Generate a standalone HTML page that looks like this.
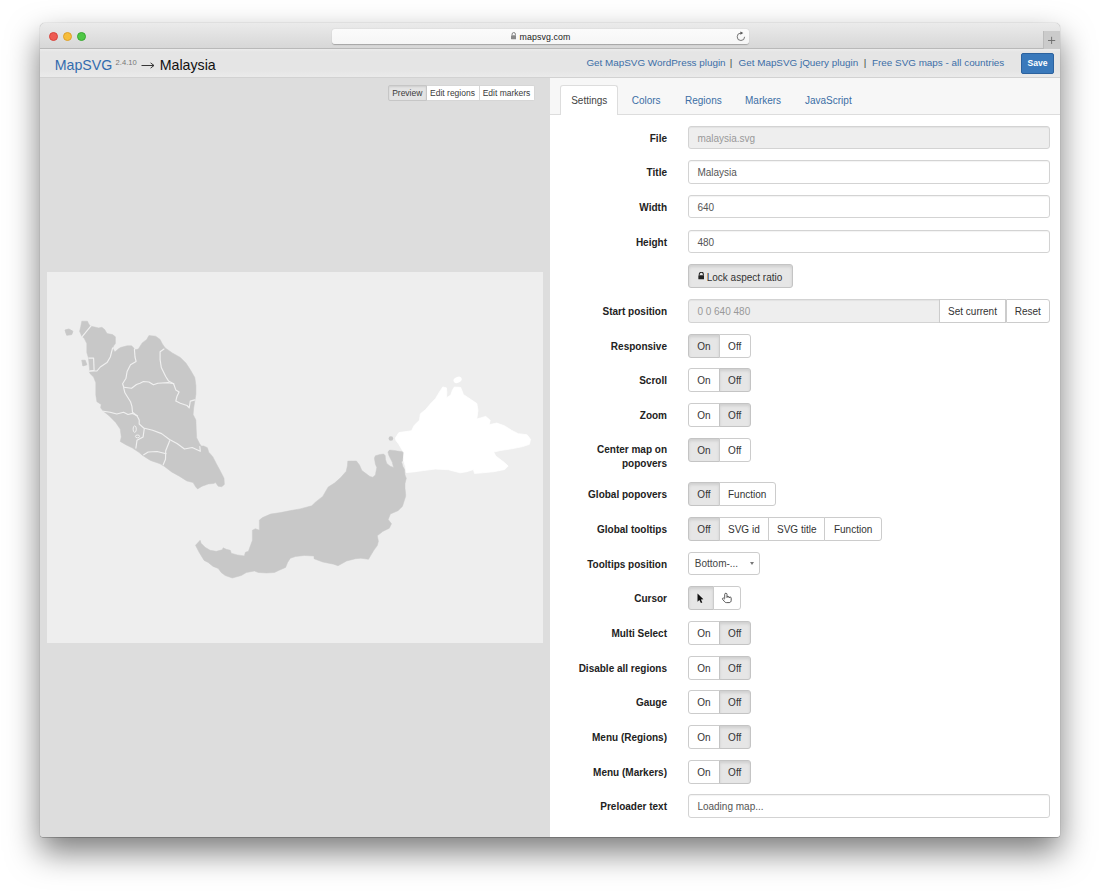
<!DOCTYPE html>
<html><head><meta charset="utf-8">
<style>
*{margin:0;padding:0;box-sizing:border-box}
html,body{width:1100px;height:894px;overflow:hidden;background:#fff;font-family:"Liberation Sans",sans-serif}
.abs{position:absolute}
#win{position:absolute;left:40px;top:23px;width:1020px;height:814px;border-radius:5px 5px 3px 3px;box-shadow:0 15px 32px rgba(0,0,0,0.52),0 0.5px 0.5px rgba(0,0,0,0.35),0 0 1px rgba(0,0,0,0.45);overflow:hidden;background:#dedede}
#titlebar{position:absolute;left:0;top:0;width:1020px;height:26px;background:linear-gradient(#ebebeb,#d7d7d7);border-bottom:1px solid #b9b9b9}
.dot{position:absolute;top:8.6px;width:9px;height:9px;border-radius:50%}
#url{position:absolute;left:292px;top:5.7px;width:416.7px;height:15.5px;background:linear-gradient(#fbfbfb,#f6f6f6);border-radius:3px;box-shadow:0 0.5px 1px rgba(0,0,0,0.25)}
#urltext{position:absolute;left:187.5px;top:3.2px;font-size:8.8px;color:#222;letter-spacing:0.1px}
#plus{position:absolute;left:1002.8px;top:8px;width:17.5px;height:18px;background:#cbcbcb;border-left:1px solid #bcbcbc}
#hdr{position:absolute;left:0;top:26px;width:1020px;height:29px;background:linear-gradient(#ececec 0,#e5e5e5 3px,#e5e5e5 21px,#eaeaea 27px);border-bottom:1px solid #d2d2d2}
#left{position:absolute;left:0;top:55px;width:510px;height:759px;background:#dddddd}
#right{position:absolute;left:510px;top:55px;width:510px;height:759px;background:#fff}
#tabs{position:absolute;left:0;top:0;width:510px;height:37px;background:#f7f7f7;border-bottom:1px solid #dddddd}
.tab{position:absolute;top:17.5px;font-size:10px;color:#3b6ea5;line-height:10px}
.tabact{position:absolute;left:9.7px;top:7.2px;width:58.5px;height:30px;background:#fff;border:1px solid #ddd;border-bottom:none;border-radius:3px 3px 0 0}
/* form in window coords: subtract 40,22 */
.lbl{position:absolute;right:433px;font-size:10px;font-weight:bold;color:#222;line-height:24px;padding-top:1px;text-align:right;white-space:nowrap}
.lbl.two{line-height:14px;padding-top:5.5px}
.inp{position:absolute;left:688.2px;width:361.5px;height:23.5px;border:1px solid #d3d3d3;border-radius:3px;background:#fff;font-size:10px;color:#555;line-height:23px;padding-left:8.2px;box-shadow:inset 0 1px 1px rgba(0,0,0,0.05)}
.inp.dis{background:#eeeeee;color:#999}
.inp.sp{width:252px;border-radius:3px 0 0 3px}
.btn{position:absolute;left:688.2px;height:24px;border:1px solid #ccc;border-radius:3px;background:#fff;font-size:10px;color:#333;line-height:23.2px;text-align:center}
.lockbtn{width:104.5px;background:#e6e6e6;border-color:#c4c4c4;text-align:left;box-shadow:inset 0 2px 3px rgba(0,0,0,0.1)}
.bg{position:absolute;left:688.2px;height:24px;display:flex}
.bg .b{position:relative;height:24px;border:1px solid #ccc;background:#fff;font-size:10px;color:#333;line-height:23.4px;text-align:center;margin-left:-1px}
.bg .b:first-child{margin-left:0;border-radius:3px 0 0 3px}
.bg .b:last-child{border-radius:0 3px 3px 0}
.bg .b.act{background:#e6e6e6;border-color:#c4c4c4;box-shadow:inset 0 2px 3px rgba(0,0,0,0.1)}
.sel{position:absolute;left:688.2px;width:72px;height:23.5px;border:1px solid #ccc;border-radius:3px;background:#fff;font-size:10px;color:#444;line-height:22px;padding-left:5.6px}
.caret{position:absolute;left:61.3px;top:9.8px;width:0;height:0;border-left:2.4px solid transparent;border-right:2.4px solid transparent;border-top:3.2px solid #777}
.lnk{top:9.1px;font-size:9.9px;line-height:9.9px;color:#3c6ea7;white-space:nowrap}
</style></head><body>
<div id="win">
 <div id="titlebar">
  <div class="dot" style="left:9px;background:#ee5b53;border:0.5px solid #d8443d"></div>
  <div class="dot" style="left:23px;background:#f6bd3b;border:0.5px solid #dea02a"></div>
  <div class="dot" style="left:37px;background:#4fc746;border:0.5px solid #3aa932"></div>
  <div id="url">
   <svg width="5.5" height="7.5" viewBox="0 0 6 8" style="position:absolute;left:178.5px;top:3.5px"><path d="M1.2 3.5V2.3a1.8 1.8 0 0 1 3.6 0v1.2" fill="none" stroke="#777" stroke-width="1"/><rect x="0" y="3.4" width="6" height="4.3" rx="0.5" fill="#888"/></svg>
   <div id="urltext">mapsvg.com</div>
   <svg width="418" height="16" viewBox="0 0 418 16" style="position:absolute;left:0;top:0"><path d="M412.6 7.8A3.7 3.7 0 1 1 408.9 4.1" fill="none" stroke="#6f6f6f" stroke-width="0.95"/><path d="M408.4 2.4L411.3 4.1L408.4 5.8Z" fill="#555"/></svg>
  </div>
  <div id="plus"><svg width="17" height="18" viewBox="0 0 17 18" style="position:absolute;left:0;top:0"><path d="M7.6 5.8V13M4 9.5H11.2" stroke="#6a6a6a" stroke-width="0.9"/></svg></div>
 </div>
 <div id="hdr">
  <div class="abs" style="left:14.7px;top:9.2px;font-size:14.2px;line-height:14.2px;color:#336cae;white-space:nowrap">MapSVG</div>
  <div class="abs" style="left:75.6px;top:9.8px;font-size:7.6px;line-height:7.6px;color:#777;white-space:nowrap">2.4.10</div>
  <svg class="abs" style="left:101px;top:13px" width="14" height="7" viewBox="0 0 14 7"><path d="M0.5 3.5H12.6" stroke="#222" stroke-width="0.9"/><path d="M9.6 0.9L13 3.5L9.6 6.1" fill="none" stroke="#222" stroke-width="0.9"/></svg>
  <div class="abs" style="left:119.7px;top:9.2px;font-size:14.2px;line-height:14.2px;color:#111;white-space:nowrap">Malaysia</div>
  <div class="abs lnk" style="left:546.4px">Get MapSVG WordPress plugin</div>
  <div class="abs lnk" style="left:689.7px;color:#444">|</div>
  <div class="abs lnk" style="left:698.5px">Get MapSVG jQuery plugin</div>
  <div class="abs lnk" style="left:823.7px;color:#444">|</div>
  <div class="abs lnk" style="left:832px">Free SVG maps - all countries</div>
  <div class="abs" style="left:981px;top:4.3px;width:33px;height:20.5px;background:#3a79bb;border:1px solid #2c629e;border-radius:2px;color:#fff;font-size:8.6px;font-weight:bold;text-align:center;line-height:18.5px">Save</div>
 </div>
 <div id="left">
  <div class="abs" style="left:348px;top:7px;height:15.5px;display:flex;font-size:8.5px;color:#3a3a3a;line-height:15px;padding-top:0">
   <div style="width:38.5px;background:#e4e4e4;border:1px solid #c6c6c6;border-radius:2px 0 0 2px;text-align:center;box-shadow:inset 0 1px 2px rgba(0,0,0,0.1)">Preview</div>
   <div style="width:53px;background:#fff;border:1px solid #d6d6d6;border-left:none;text-align:center">Edit regions</div>
   <div style="width:55px;background:#fff;border:1px solid #d6d6d6;border-left:none;border-radius:0 2px 2px 0;text-align:center">Edit markers</div>
  </div>
  <div class="abs" style="left:7px;top:194px;width:496px;height:371px;background:#eeeeee;overflow:hidden"><svg width="1100" height="894" viewBox="0 0 1100 894" style="position:absolute;left:-47px;top:-272px">
<path d="M81.8 321.2 L87.4 321.2 L89.1 324.5 L90.8 326.2 L93.6 326.8 L98.6 327.9 L101.9 327.3 L104.7 329.6 L107.0 333.5 L112.6 334.6 L115.4 336.8 L115.4 343.6 L113.7 345.8 L112.6 348.0 L114.8 352.0 L118.2 349.1 L120.4 347.5 L127.1 345.8 L131.6 345.8 L133.8 348.0 L135.0 349.7 L138.3 349.1 L142.2 342.9 L146.7 339.5 L148.9 335.6 L155.7 336.2 L160.1 339.5 L162.4 344.0 L165.2 347.9 L172.4 353.0 L180.3 357.4 L185.9 363.0 L190.3 369.7 L194.8 377.6 L195.9 385.4 L195.9 394.4 L194.8 401.1 L193.7 407.8 L193.1 414.5 L195.9 420.1 L196.2 428.9 L196.7 437.9 L199.4 443.3 L201.2 446.0 L203.8 446.0 L207.4 447.7 L208.8 452.2 L212.8 456.7 L216.4 463.8 L220.8 471.9 L224.0 478.2 L224.4 484.4 L221.7 486.7 L218.2 486.2 L215.5 482.6 L213.7 483.5 L208.3 484.0 L202.1 486.2 L197.6 488.9 L195.8 487.1 L193.1 482.6 L186.8 480.9 L179.7 476.4 L171.6 471.9 L164.5 466.5 L160.0 463.8 L150.4 460.4 L142.6 455.4 L139.2 452.6 L132.5 448.1 L125.8 444.7 L120.2 441.4 L121.3 436.9 L120.2 429.1 L115.7 422.4 L109.0 415.7 L103.4 411.2 L100.6 407.8 L101.2 404.5 L96.9 401.7 L95.8 395.0 L95.8 382.7 L93.6 377.1 L90.2 373.8 L89.1 371.5 L89.6 369.8 L88.5 358.1 L86.8 352.5 L86.8 343.6 L84.0 338.0 L81.8 336.3 L79.6 331.3 L80.7 326.8Z" fill="#c8c8c8" stroke="#c8c8c8" stroke-width="0.5" stroke-linejoin="round"/>
<path d="M65.0 330.1 L68.9 329.0 L72.9 331.3 L71.7 334.6 L66.7 335.2Z" fill="#c8c8c8" stroke="#c8c8c8" stroke-width="0.8" stroke-linejoin="round"/>
<path d="M81.8 360.3 L85.2 360.3 L86.8 364.8 L82.9 365.9Z" fill="#c8c8c8" stroke="#c8c8c8" stroke-width="0.8" stroke-linejoin="round"/>
<path d="M82.4 336.3 L90.8 326.2" fill="none" stroke="#f0f0f0" stroke-width="1.15" stroke-linejoin="round" stroke-linecap="round"/>
<path d="M88.9 358.1 L93.6 358.1 L94.1 370.4 L89.1 371.3" fill="none" stroke="#f0f0f0" stroke-width="1.15" stroke-linejoin="round" stroke-linecap="round"/>
<path d="M89.6 371.0 L96.9 371.0 L100.3 367.0 L107.0 362.6 L110.3 357.0 L112.6 348.0" fill="none" stroke="#f0f0f0" stroke-width="1.15" stroke-linejoin="round" stroke-linecap="round"/>
<path d="M134.4 349.1 L135.0 357.0 L136.1 361.5 L130.5 364.8 L127.1 371.5 L126.0 378.2 L122.6 383.8 L123.8 387.2" fill="none" stroke="#f0f0f0" stroke-width="1.15" stroke-linejoin="round" stroke-linecap="round"/>
<path d="M123.8 387.2 L131.6 388.3 L136.5 384.5 L140.0 383.2 L143.4 381.5 L148.9 382.0 L153.4 384.8 L157.9 383.2 L168.0 382.6 L173.6 383.7" fill="none" stroke="#f0f0f0" stroke-width="1.15" stroke-linejoin="round" stroke-linecap="round"/>
<path d="M164.0 349.0 L160.1 351.8 L160.1 359.7 L161.3 367.5 L165.7 376.5 L168.5 380.9 L173.6 383.7" fill="none" stroke="#f0f0f0" stroke-width="1.15" stroke-linejoin="round" stroke-linecap="round"/>
<path d="M173.6 383.7 L175.8 389.9 L179.1 392.1 L176.9 396.6 L175.8 401.1 L180.3 403.3 L187.0 405.5 L189.2 407.8 L190.3 401.1 L194.8 399.9" fill="none" stroke="#f0f0f0" stroke-width="1.15" stroke-linejoin="round" stroke-linecap="round"/>
<path d="M123.8 388.3 L124.9 392.8 L130.5 401.7 L132.0 406.7 L132.5 412.3 L137.0 415.7" fill="none" stroke="#f0f0f0" stroke-width="1.15" stroke-linejoin="round" stroke-linecap="round"/>
<path d="M103.4 411.2 L110.1 412.3 L116.8 414.0 L123.6 412.3 L128.0 414.5 L132.5 413.4 L137.0 415.7" fill="none" stroke="#f0f0f0" stroke-width="1.15" stroke-linejoin="round" stroke-linecap="round"/>
<path d="M137.0 415.7 L139.2 420.1 L139.2 424.0 L143.7 428.0 L152.6 430.2 L161.6 433.6 L169.5 439.5 L177.0 443.5 L184.5 449.0 L192.2 447.5 L200.3 451.3 L199.8 446.5" fill="none" stroke="#f0f0f0" stroke-width="1.15" stroke-linejoin="round" stroke-linecap="round"/>
<path d="M144.3 428.5 L143.1 436.9 L137.0 440.3 L135.9 448.1" fill="none" stroke="#f0f0f0" stroke-width="1.15" stroke-linejoin="round" stroke-linecap="round"/>
<path d="M169.7 440.7 L165.7 450.8 L165.5 459.2 L163.2 464.8" fill="none" stroke="#f0f0f0" stroke-width="1.15" stroke-linejoin="round" stroke-linecap="round"/>
<path d="M143.7 454.8 L148.2 452.0 L157.1 451.5 L166.1 453.7" fill="none" stroke="#f0f0f0" stroke-width="1.15" stroke-linejoin="round" stroke-linecap="round"/>
<ellipse cx="134.7" cy="429.1" rx="1.6" ry="3.2" fill="none" stroke="#f0f0f0" stroke-width="1"/>
<ellipse cx="137.5" cy="436.4" rx="2.1" ry="1.4" fill="none" stroke="#f0f0f0" stroke-width="1"/>
<path d="M195.5 545.3 L200.1 540.3 L201.1 543.3 L205.1 547.3 L210.1 550.3 L216.2 551.3 L222.2 549.8 L223.2 547.8 L226.2 549.3 L230.3 550.3 L231.3 553.3 L237.3 554.9 L244.3 555.9 L245.4 552.3 L248.4 551.3 L252.4 540.3 L252.4 530.2 L255.4 528.7 L259.4 530.2 L259.4 520.1 L262.5 517.6 L270.5 514.1 L280.6 512.6 L290.6 510.6 L300.0 508.9 L311.7 505.8 L315.7 501.9 L322.7 496.4 L328.2 487.0 L334.5 483.1 L340.7 477.6 L346.2 471.3 L347.4 465.8 L347.8 461.1 L356.4 461.0 L359.5 465.1 L361.9 470.5 L366.0 473.6 L370.0 476.6 L372.8 477.2 L375.4 474.9 L376.1 470.9 L376.8 467.5 L375.4 464.2 L374.4 458.1 L375.4 455.8 L380.1 454.4 L383.5 454.1 L385.2 455.4 L385.5 459.5 L386.8 463.5 L390.2 466.2 L393.6 467.5 L392.2 462.1 L388.9 455.4 L387.9 452.1 L389.5 450.1 L393.6 450.4 L397.6 451.1 L402.3 451.7 L404.6 454.1 L404.0 458.8 L401.6 462.1 L403.0 466.8 L404.6 469.5 L405.0 474.9 L406.3 478.3 L405.0 483.6 L405.0 488.3 L405.6 493.7 L405.6 496.5 L402.4 506.4 L398.0 510.7 L390.4 514.0 L388.2 519.5 L391.5 523.8 L389.3 528.2 L382.7 531.5 L377.3 535.8 L378.4 541.3 L377.3 545.6 L374.0 550.0 L370.7 555.5 L368.5 559.3 L360.9 558.2 L355.5 558.7 L346.7 560.9 L338.0 565.8 L333.6 564.2 L322.7 562.0 L314.0 558.7 L314.0 556.0 L304.2 555.5 L295.5 556.5 L290.3 558.3 L287.6 562.4 L285.6 567.4 L278.6 570.5 L274.5 572.5 L266.5 573.0 L258.4 572.5 L254.4 571.0 L246.4 572.5 L241.3 575.5 L232.3 578.0 L225.2 575.5 L221.2 572.5 L218.2 568.4 L213.1 566.4 L208.1 562.4 L204.1 560.4 L199.1 552.3Z" fill="#c8c8c8" stroke="#c8c8c8" stroke-width="0.5" stroke-linejoin="round"/>
<path d="M396.0 440.6 L395.4 438.0 L398.9 432.6 L411.5 430.8 L414.2 425.5 L419.5 420.1 L420.4 413.8 L425.8 409.4 L430.3 404.0 L435.6 398.6 L439.2 392.4 L442.8 387.0 L446.4 387.9 L446.8 392.4 L446.4 397.7 L450.8 395.1 L452.6 389.7 L454.4 387.0 L460.7 387.5 L463.4 394.5 L470.1 399.0 L476.8 403.5 L477.9 410.2 L476.8 419.1 L485.7 416.4 L490.2 420.3 L489.1 424.7 L496.9 423.1 L504.7 425.9 L511.5 430.3 L518.2 433.7 L527.1 434.8 L530.5 439.3 L529.4 444.3 L522.6 446.6 L511.5 448.8 L500.3 450.5 L493.6 452.1 L495.8 456.1 L504.7 462.8 L508.1 466.1 L504.7 469.5 L493.6 471.7 L482.4 472.8 L474.5 473.4 L473.4 469.5 L466.7 471.7 L460.0 472.8 L448.4 469.7 L435.3 469.0 L423.6 470.5 L413.5 471.9 L406.2 472.6 L405.5 466.8 L403.3 459.5 L404.0 452.3 L401.8 449.4 L398.9 444.3Z" fill="#ffffff" stroke="#fff" stroke-width="0.8" stroke-linejoin="round"/>
<ellipse cx="457.6" cy="379.8" rx="4.3" ry="2.9" transform="rotate(-25 457.6 379.8)" fill="#fff"/>
<circle cx="390.9" cy="438.5" r="2.3" fill="#c8c8c8"/>
</svg></div>
 </div>
 <div id="right">
  <div id="tabs">
   <div class="tabact"></div>
   <div class="tab" style="left:21.2px;color:#444">Settings</div>
   <div class="tab" style="left:81.7px">Colors</div>
   <div class="tab" style="left:135px">Regions</div>
   <div class="tab" style="left:195px">Markers</div>
   <div class="tab" style="left:255px">JavaScript</div>
  </div>
 </div>
 <div id="form" class="abs" style="left:-40px;top:-23px;width:1100px;height:894px">
<div class="lbl" style="top:125.5px">File</div>
<div class="inp dis" style="top:125.5px">malaysia.svg</div>
<div class="lbl" style="top:160.2px">Title</div>
<div class="inp" style="top:160.2px">Malaysia</div>
<div class="lbl" style="top:194.9px">Width</div>
<div class="inp" style="top:194.9px">640</div>
<div class="lbl" style="top:229.6px">Height</div>
<div class="inp" style="top:229.6px">480</div>
<div class="btn lockbtn" style="top:264.3px"><svg width="6.6" height="7.4" viewBox="0 0 7 8" style="position:absolute;left:8.4px;top:7px"><path d="M1.3 3.6V2.4a2.2 2.2 0 0 1 4.4 0v1.2" fill="none" stroke="#222" stroke-width="1.1"/><rect x="0.3" y="3.5" width="6.4" height="4.3" rx="0.6" fill="#222"/></svg><span style="position:absolute;left:17.5px;top:0.4px">Lock aspect ratio</span></div>
<div class="lbl" style="top:299.0px">Start position</div>
<div class="inp dis sp" style="top:299.0px">0 0 640 480</div>
<div class="btn" style="top:299.0px;left:939px;width:67px;border-radius:0">Set current</div>
<div class="btn" style="top:299.0px;left:1005.5px;width:44.5px;border-radius:0 3px 3px 0">Reset</div>
<div class="lbl" style="top:333.7px">Responsive</div>
<div class="bg" style="top:333.7px"><div class="b act" style="width:31.5px">On</div><div class="b " style="width:32px">Off</div></div>
<div class="lbl" style="top:368.4px">Scroll</div>
<div class="bg" style="top:368.4px"><div class="b " style="width:31.5px">On</div><div class="b act" style="width:32px">Off</div></div>
<div class="lbl" style="top:403.1px">Zoom</div>
<div class="bg" style="top:403.1px"><div class="b " style="width:31.5px">On</div><div class="b act" style="width:32px">Off</div></div>
<div class="lbl two" style="top:437.8px">Center map on<br>popovers</div>
<div class="bg" style="top:437.8px"><div class="b act" style="width:31.5px">On</div><div class="b " style="width:32px">Off</div></div>
<div class="lbl" style="top:482.1px">Global popovers</div>
<div class="bg" style="top:482.1px"><div class="b act" style="width:31.5px">Off</div><div class="b " style="width:57px">Function</div></div>
<div class="lbl" style="top:516.8px">Global tooltips</div>
<div class="bg" style="top:516.8px"><div class="b act" style="width:31.5px">Off</div><div class="b " style="width:50.4px">SVG id</div><div class="b " style="width:57.4px">SVG title</div><div class="b " style="width:57.3px">Function</div></div>
<div class="lbl" style="top:551.5px">Tooltips position</div>
<div class="sel" style="top:551.5px">Bottom-...<span class="caret"></span></div>
<div class="lbl" style="top:586.2px">Cursor</div>
<div class="bg" style="top:586.2px"><div class="b act" style="width:25.5px"></div><div class="b" style="width:28.5px"></div></div>
<svg class="abs" style="left:0;top:0;position:absolute" width="1100" height="894" viewBox="0 0 1100 894"><path d="M697.5 593.4L697.5 601.7L699.4 600L700.9 603.1L702.3 602.4L700.9 599.4L703.4 599.2Z" fill="#111"/><path d="M724.7 598.6V594.4a1.15 1.15 0 0 1 2.3 0V597.6M727 597.4a1.05 1.05 0 0 1 2.1 0.1V598M729.1 598a1.05 1.05 0 0 1 2.1 0.2V600.4c0 1.3-0.9 2.2-2.1 2.2H726.4c-0.8 0-1.3-0.3-1.8-0.9L722.5 599.2a0.8 0.8 0 0 1 1.2-1L724.7 599.1" fill="none" stroke="#3a3a3a" stroke-width="0.85" stroke-linejoin="round"/></svg>
<div class="lbl" style="top:620.9px">Multi Select</div>
<div class="bg" style="top:620.9px"><div class="b " style="width:31.5px">On</div><div class="b act" style="width:32px">Off</div></div>
<div class="lbl" style="top:655.6px">Disable all regions</div>
<div class="bg" style="top:655.6px"><div class="b " style="width:31.5px">On</div><div class="b act" style="width:32px">Off</div></div>
<div class="lbl" style="top:690.3px">Gauge</div>
<div class="bg" style="top:690.3px"><div class="b " style="width:31.5px">On</div><div class="b act" style="width:32px">Off</div></div>
<div class="lbl" style="top:725.0px">Menu (Regions)</div>
<div class="bg" style="top:725.0px"><div class="b " style="width:31.5px">On</div><div class="b act" style="width:32px">Off</div></div>
<div class="lbl" style="top:759.7px">Menu (Markers)</div>
<div class="bg" style="top:759.7px"><div class="b " style="width:31.5px">On</div><div class="b act" style="width:32px">Off</div></div>
<div class="lbl" style="top:794.4px">Preloader text</div>
<div class="inp" style="top:794.4px">Loading map...</div>
 </div>
</div>
</body></html>
